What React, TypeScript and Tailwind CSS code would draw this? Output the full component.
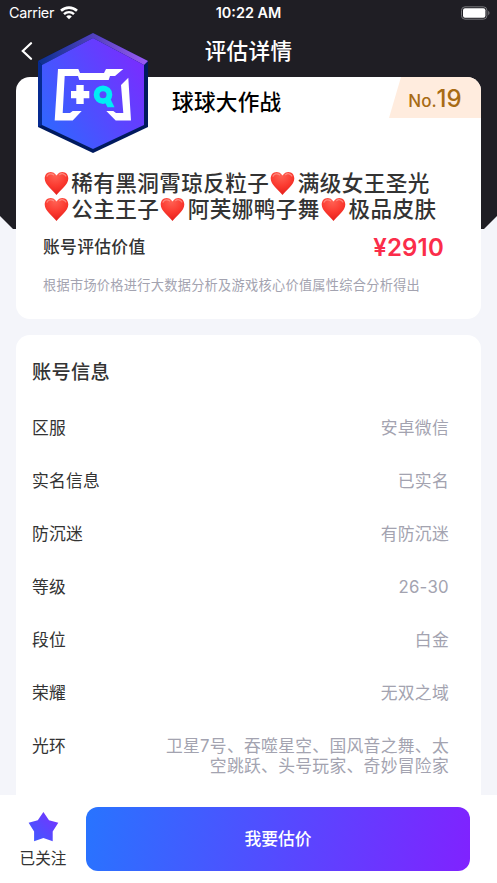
import { Fragment } from "react";

const evaluation = {
  game: "球球大作战",
  rank: "19",
  titleLines: [
    ["稀有黑洞霄琼反粒子", "满级女王圣光"],
    ["公主王子", "阿芙娜鸭子舞", "极品皮肤"],
  ],
  price: "¥2910",
  note: "根据市场价格进行大数据分析及游戏核心价值属性综合分析得出",
};

const accountInfo = [
  { label: "区服", value: ["安卓微信"] },
  { label: "实名信息", value: ["已实名"] },
  { label: "防沉迷", value: ["有防沉迷"] },
  { label: "等级", value: ["26-30"] },
  { label: "段位", value: ["白金"] },
  { label: "荣耀", value: ["无双之域"] },
  {
    label: "光环",
    value: ["卫星7号、吞噬星空、国风音之舞、太", "空跳跃、头号玩家、奇妙冒险家"],
  },
];

function WifiIcon() {
  return (
    <svg width="18" height="14" viewBox="0 0 18 14" fill="none" stroke="#fff">
      <path d="M1 4.800C5.500.5 12.500.5 17 4.800" strokeWidth="2.600" />
      <path d="M4 8.100c2.800-2.700 7.200-2.700 10 0" strokeWidth="2.400" />
      <path d="M9 13.200 6.200 10.400c1.600-1.500 4-1.500 5.600 0Z" fill="#fff" stroke="none" />
    </svg>
  );
}

function BatteryIcon() {
  return (
    <svg width="30" height="14" viewBox="0 0 30 14" fill="none">
      <rect x="1.500" y=".8" width="25.400" height="12.400" rx="3.500" stroke="#77777b" />
      <rect x="3" y="2.300" width="22.400" height="9.400" rx="2" fill="#fff" />
      <path d="M28.200 4.800c1.800.8 1.800 3.600 0 4.400Z" fill="#77777b" />
    </svg>
  );
}

function Heart() {
  return (
    <svg className="mr-[2.500px] ml-[1.200px] shrink-0" width="25" height="25" viewBox="0 0 25 25">
      <defs>
        <radialGradient id="heart" cx=".45" cy=".15" r=".85">
          <stop offset="0" stopColor="#ff6254" />
          <stop offset=".55" stopColor="#fb3a30" />
          <stop offset="1" stopColor="#e41f1b" />
        </radialGradient>
      </defs>
      <path
        d="M12.500 4.600C10.900 1.900 8.800.9 6.600.9 3.100.9.700 3.700.700 7.400c0 6.500 7.500 10.800 11.800 16.700 4.300-5.900 11.800-10.200 11.800-16.700 0-3.700-2.400-6.500-5.900-6.500-2.200 0-4.300 1-5.900 3.700Z"
        fill="url(#heart)"
      />
      <path d="M3 5.200c1-2.300 4.300-3.300 6.500-1.400M15.600 3.700c2-1.800 5.200-.9 6.300 1.300" fill="none" stroke="#ff9b90" strokeWidth="1.200" strokeLinecap="round" opacity=".75" />
    </svg>
  );
}

function GameBadge() {
  return (
    <svg width="110" height="121" viewBox="0 0 110 121">
      <defs>
        <linearGradient id="face" x1="0" y1=".85" x2="1" y2=".2">
          <stop offset="0" stopColor="#2e68ff" />
          <stop offset="1" stopColor="#7a2cff" />
        </linearGradient>
        <linearGradient id="bevel" x1="0" y1="0" x2="1" y2="0">
          <stop offset="0" stopColor="#0b3090" />
          <stop offset=".5" stopColor="#5140bd" />
          <stop offset="1" stopColor="#9c5bf5" />
        </linearGradient>
      </defs>
      <path d="M0 28 55 0l55 28v66l-55 26L0 94Z" fill="#001a5e" />
      <path d="M0 28 55 0l55 28-4 4L55 5 4 32Z" fill="url(#bevel)" />
      <path d="M0 28 4 32v60l-4 2Z" fill="#062a91" />
      <path d="M55 5 106 32v60l-51 24L4 92V32Z" fill="url(#face)" />
      <g fill="#fff">
        <path d="M20 36h20.300l1.700 4h24l2-4h17.300L77 43h-5l-1.300 4H41.300L40 43H26.700l-2 37H32l2.700-2h9l-9 9.500h-18Z" />
        <path d="M90.300 44.700 93 87.500H77.700L68.300 78h7l2.700 2h7.300L83 52Z" />
        <path d="M38.300 52h7.400v6h5.600v7.300h-5.600V71h-7.400v-5.700H33V58h5.300Z" />
      </g>
      <circle cx="65" cy="61.700" r="6.400" fill="none" stroke="#00ecf5" strokeWidth="5.800" />
      <path d="m66.500 68.500 6-2.500 4 8.300h-7Z" fill="#00ecf5" />
    </svg>
  );
}

function StarIcon() {
  return (
    <svg width="31" height="30" viewBox="0 0 31 30">
      <defs>
        <linearGradient id="star" x1="0" y1="1" x2="1" y2="0">
          <stop offset="0" stopColor="#3b5cff" />
          <stop offset="1" stopColor="#7a30ff" />
        </linearGradient>
      </defs>
      <path
        d="m15.400 0 5.600 8.200 9.300 2.500-5.600 8.800V29.200l-9.300-3.200-9.300 3.200V19.500L.6 10.700 9.800 8.200Z"
        fill="url(#star)"
      />
    </svg>
  );
}

function Header() {
  return (
    <header className="text-white">
      <div className="grid h-[26px] grid-cols-3 items-center pr-[7px] pl-[9px] text-[14.400px]">
        <div className="flex items-center gap-[6px]">
          <span className="tracking-[-0.300px]">Carrier</span>
          <WifiIcon />
        </div>
        <span className="-ml-[2px] text-center font-semibold">10:22 AM</span>
        <div className="flex justify-end">
          <BatteryIcon />
        </div>
      </div>
      <div className="grid h-[51px] grid-cols-[60px_1fr_60px] items-center">
        <svg className="-mt-[2px] ml-[21px]" width="12" height="18" viewBox="0 0 12 18" fill="none" stroke="#fff" strokeWidth="2.200" strokeLinecap="round">
          <path d="M10 1.200 1.800 9l8.200 7.800" />
        </svg>
        <h1 className="text-center text-[21.600px] font-medium tracking-[0.300px]">评估详情</h1>
      </div>
    </header>
  );
}

function SummaryCard() {
  return (
    <section className="relative h-[242px] rounded-[14px] bg-white">
      <div className="absolute -top-11 left-[22px]">
        <GameBadge />
      </div>
      <div className="flex h-[41px] justify-between pl-[156px]">
        <h2 className="pt-[9px] text-[21.600px] leading-8 font-medium tracking-[0.300px] text-black">{evaluation.game}</h2>
        <div className="flex w-[92px] items-baseline justify-center rounded-tr-[14px] bg-[#ffecde] pt-[4px] font-medium text-[#a86b14] [clip-path:polygon(12px_0,100%_0,100%_100%,0_100%)]">
          <span className="text-[17px]">No.</span>
          <span className="text-[24px]">{evaluation.rank}</span>
        </div>
      </div>
      <div className="px-[27px] pt-[52px] text-[#333]">
        {evaluation.titleLines.map((line, index) => (
          <p key={index} className="-ml-[0.500px] flex h-[26px] items-center text-[21.600px] font-medium tracking-[0.400px] whitespace-nowrap">
            {line.map((text) => (
              <Fragment key={text}>
                <Heart />
                <span>{text}</span>
              </Fragment>
            ))}
          </p>
        ))}
        <div className="mt-[10px] flex h-8 items-center justify-between pr-[10px]">
          <span className="text-[16.800px] font-medium tracking-[0.300px]">账号评估价值</span>
          <span className="text-[24px] font-semibold tracking-[0.200px] text-[#fb2d4a]">{evaluation.price}</span>
        </div>
        <p className="mt-[11px] text-[13.200px] leading-5 tracking-[0.280px] whitespace-nowrap text-[#a3a3b0]">{evaluation.note}</p>
      </div>
    </section>
  );
}

function AccountCard() {
  return (
    <section className="min-h-0 flex-1 overflow-hidden rounded-t-[14px] bg-white pr-8 pl-4">
      <h2 className="pt-[22px] text-[19.200px] leading-[30px] font-medium tracking-[0.300px] text-[#333]">账号信息</h2>
      <dl className="pt-[31.400px] text-[16.800px] leading-5">
        {accountInfo.map((row) => (
          <div key={row.label} className="flex h-[52.900px] justify-between">
            <dt className="tracking-[0.200px] text-[#333]">{row.label}</dt>
            <dd className="text-right tracking-[0.300px] whitespace-nowrap text-[#a3a3b0]">
              {row.value.map((text) => (
                <div key={text}>{text}</div>
              ))}
            </dd>
          </div>
        ))}
      </dl>
    </section>
  );
}

function ActionBar() {
  return (
    <footer className="flex h-[88px] bg-white pt-3 pr-[27px]">
      <button className="flex w-[86px] flex-col items-center pt-[5px]">
        <StarIcon />
        <span className="mt-[5px] text-[15.600px] leading-[23px] text-[#333]">已关注</span>
      </button>
      <button className="h-[64px] flex-1 rounded-xl bg-linear-[100deg] from-[#2874ff] to-[#8022ff] pt-[2px] text-[16.800px] font-medium text-white">
        我要估价
      </button>
    </footer>
  );
}

export default function App() {
  return (
    <div className="grid h-[883px] w-[497px] overflow-hidden bg-[#f4f5fa] font-['Inter','Noto_Sans_CJK_SC',sans-serif]">
      <div className="col-start-1 row-start-1 h-[229px] bg-[#1f1e24] [clip-path:polygon(0_0,100%_0,100%_216px,484px_100%,13px_100%,0_216px)]" />
      <div className="z-10 col-start-1 row-start-1 flex h-[883px] flex-col">
        <Header />
        <main className="flex min-h-0 flex-1 flex-col gap-4 pr-[16px] pl-4">
          <SummaryCard />
          <AccountCard />
        </main>
        <ActionBar />
      </div>
    </div>
  );
}
